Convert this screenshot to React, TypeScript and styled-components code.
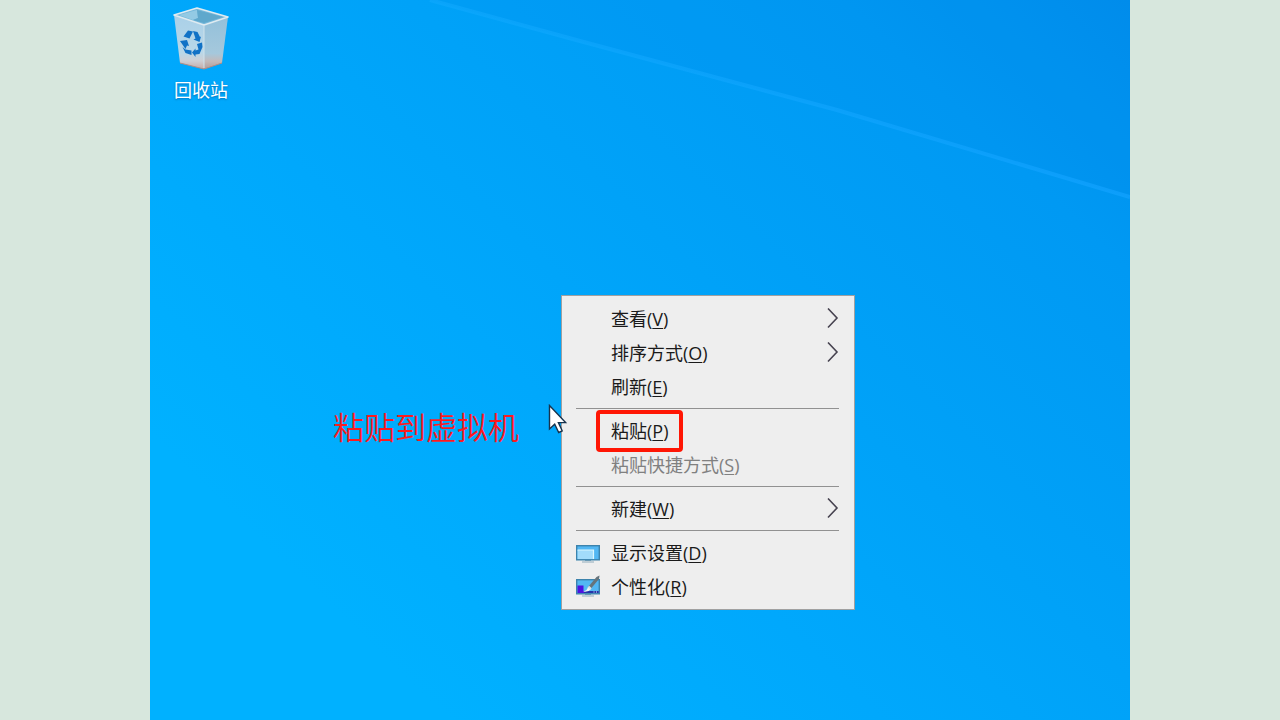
import React from "react";
import styled, { createGlobalStyle } from "styled-components";

const GlobalStyle = createGlobalStyle`
  *, *::before, *::after { box-sizing: border-box; }
  body {
    margin: 0;
    background: #d7e7dd;
    font-family: "Open Sans", "Noto Sans CJK SC", sans-serif;
  }
`;

const Page = styled.main`
  display: flex;
  min-height: 100vh;
  padding: 0 150px;
  background: #d7e7dd;
`;

const Desktop = styled.section`
  position: relative;
  flex: 1;
  min-width: 0;
  overflow: hidden;
  background: #00a8fb;
`;

const Wallpaper = styled.svg`
  position: absolute;
  inset: 0;
  width: 100%;
  height: 100%;
`;

const Shortcut = styled.button`
  position: absolute;
  top: 6px;
  left: 16px;
  display: flex;
  flex-direction: column;
  align-items: center;
  gap: 8px;
  width: 70px;
  padding: 0;
  border: 0;
  background: none;
  color: #fff;
  font: inherit;
  font-size: 18px;
  line-height: 24px;
  text-shadow: 0 1px 2px rgba(0, 40, 90, 0.4);
`;

const Note = styled.p`
  position: absolute;
  top: 404px;
  left: 183px;
  margin: 0;
  color: #fb1b1f;
  font-family: "Noto Sans CJK SC", sans-serif;
  font-size: 31px;
  font-weight: 350;
  line-height: 44px;
  white-space: nowrap;
`;

const Menu = styled.div`
  position: absolute;
  top: 295px;
  left: 411px;
  width: 294px;
  padding: 6px 0 5px;
  border: 1px solid #a0a0a0;
  background: #eee;
`;

const MenuItem = styled.button`
  position: relative;
  display: grid;
  grid-template-columns: 24px 1fr 12px;
  column-gap: 11px;
  align-items: center;
  width: 100%;
  height: 34px;
  padding: 0 15px 0 14px;
  border: 0;
  background: none;
  color: #1a1a1a;
  font: inherit;
  font-size: 18px;
  line-height: 24px;
  text-align: left;
  white-space: nowrap;

  &:disabled { color: #808080; }
`;

const IconSlot = styled.span`
  display: flex;
`;

const AccessKey = styled.span`
  text-decoration: underline;
  text-decoration-thickness: 1px;
  text-underline-offset: 2px;
`;

const Separator = styled.hr`
  height: 1px;
  margin: 4px 15px 5px 14px;
  border: 0;
  background: #919191;
`;

const Highlight = styled.span`
  position: absolute;
  top: -4px;
  left: 34px;
  width: 87px;
  height: 42px;
  border: 4px solid #ff1604;
  border-radius: 4px;
`;

const Pointer = styled.svg`
  position: absolute;
  top: 404px;
  left: 398px;
`;

function RecycleBin() {
  return (
    <svg width="56" height="64" viewBox="0 0 56 64" aria-hidden="true">
      <defs>
        <linearGradient id="binLeft" x1="0" y1="0" x2="0" y2="1">
          <stop offset="0" stopColor="#a9d0e8" />
          <stop offset="0.7" stopColor="#b9d7e8" />
          <stop offset="0.85" stopColor="#cfcfd4" />
          <stop offset="1" stopColor="#c5aaa7" />
        </linearGradient>
        <linearGradient id="binRight" x1="0" y1="0" x2="0" y2="1">
          <stop offset="0" stopColor="#93c0da" />
          <stop offset="0.7" stopColor="#a5c8dc" />
          <stop offset="0.85" stopColor="#c3b9ba" />
          <stop offset="1" stopColor="#b39c99" />
        </linearGradient>
      </defs>
      <path d="M1 9 31 19 31 63 7 57Z" fill="url(#binLeft)" />
      <path d="M31 19 55 11 49 57 31 63Z" fill="url(#binRight)" />
      <path d="M1 9 24 2 55 11 31 19Z" fill="#76b8da" />
      <path d="M6 9 24 4 25 12 20 14Z" fill="#93cae4" />
      <path d="M24 4 50 11 31 17 20 14 25 12Z" fill="#5fa8cc" />
      <path d="M1 9 24 2 55 11 31 19Z" fill="none" stroke="#dfebf1" strokeWidth="1.6" strokeLinejoin="round" />
      <path d="M31 19 31 62" stroke="#cfe2ec" />
      <path d="M7 57 31 63 49 57" fill="none" stroke="#b58c84" />
      <g fill="#1172c6">
        <path d="M10.500 30.500 15 24.500 20 25.500 16.500 32.500Z" />
        <path d="M20 25 24.500 26 27 31 28 30.500 26.500 36 20.500 33.500 22.500 32.500Z" />
        <path d="M7 35 14 34 16 40 14 39.500 12.500 43Z" />
        <path d="M9.500 41 12.500 43.500 18.500 44.500 18.500 49 12.500 47Z" />
        <path d="M24 38 29 36.500 29.500 41 26.500 48 22.500 48.500 22.500 51 19 46.500 22.500 42.500 22.500 44.500 25.500 43.500Z" />
      </g>
    </svg>
  );
}

function DisplayIcon({ brush = false }: { brush?: boolean }) {
  return (
    <svg width="24" height="24" viewBox="0 0 24 24" aria-hidden="true">
      <path d="M9 19.500h6M6 21h12" stroke="#8fabbb" strokeWidth="1.200" />
      <rect x="0.700" y="4.700" width="22.600" height="14.100" fill="#52b7f3" stroke="#3c83ac" strokeWidth="1.400" />
      {brush ? (
        <>
          <path d="M1.500 18V10.500H7.500V16H22.500V18Z" fill="#4d12e0" />
          <path d="M8 17h14.500" stroke="#1b3d9c" strokeWidth="1.600" />
          <path d="M17.500 17h1M20 17h1" stroke="#e5f0ff" strokeWidth="1" />
          <path d="M7 16.500q4-0.500 5-4.500l3 2q-2.500 3.500-8 2.500Z" fill="#eef3f6" />
          <path d="M12.500 11.500 20.500 2 23.500 0.500 23 4 15 13.500Z" fill="#66747b" />
          <path d="m12.500 11.500 2.500 2.500" stroke="#d7e0e3" strokeWidth="2" />
        </>
      ) : (
        <>
          <path d="M1.500 9H17.500v9h-16Z" fill="#a2dcfb" />
          <path d="M1.500 9H17.500v9" fill="none" stroke="#dbf7ff" strokeWidth="1.200" />
        </>
      )}
    </svg>
  );
}

function Chevron() {
  return (
    <svg width="12" height="22" viewBox="0 0 12 22" aria-hidden="true">
      <path d="m1 0.500 9 9.500-9 9.500" fill="none" stroke="#474350" strokeWidth="1.600" />
    </svg>
  );
}

type EntryProps = {
  label: string;
  accessKey: string;
  icon?: React.ReactNode;
  submenu?: boolean;
  disabled?: boolean;
  highlighted?: boolean;
};

function Entry({ label, accessKey, icon, submenu, disabled, highlighted }: EntryProps) {
  return (
    <MenuItem type="button" role="menuitem" disabled={disabled} aria-haspopup={submenu ? "menu" : undefined}>
      <IconSlot>{icon}</IconSlot>
      <span>
        {label}(<AccessKey>{accessKey}</AccessKey>)
      </span>
      {submenu && <Chevron />}
      {highlighted && <Highlight />}
    </MenuItem>
  );
}

export default function App() {
  return (
    <>
      <GlobalStyle />
      <Page>
        <Desktop>
          <Wallpaper viewBox="0 0 980 720" preserveAspectRatio="none" aria-hidden="true">
            <defs>
              <linearGradient id="sky" gradientUnits="userSpaceOnUse" x1="980" y1="0" x2="300" y2="720">
                <stop offset="0" stopColor="#008eec" />
                <stop offset="0.2" stopColor="#0099f3" />
                <stop offset="0.5" stopColor="#00a2f8" />
                <stop offset="0.7" stopColor="#00a8fc" />
                <stop offset="1" stopColor="#00b1ff" />
              </linearGradient>
              <linearGradient id="beam" x1="0" x2="1">
                <stop offset="0" stopColor="#12aaff" stopOpacity="0.5" />
                <stop offset="1" stopColor="#12a2ff" stopOpacity="0.7" />
              </linearGradient>
            </defs>
            <rect width="980" height="720" fill="url(#sky)" />
            <path d="M280 0 430 41 687 110 980 197V0Z" fill="#0084e5" opacity="0.12" />
            <path d="M280 0 430 41 687 110 980 197" fill="none" stroke="url(#beam)" strokeWidth="4" />
          </Wallpaper>
          <Shortcut type="button">
            <RecycleBin />
            回收站
          </Shortcut>
          <Note>粘贴到虚拟机</Note>
          <Menu role="menu" aria-label="桌面">
            <Entry label="查看" accessKey="V" submenu />
            <Entry label="排序方式" accessKey="O" submenu />
            <Entry label="刷新" accessKey="E" />
            <Separator />
            <Entry label="粘贴" accessKey="P" highlighted />
            <Entry label="粘贴快捷方式" accessKey="S" disabled />
            <Separator />
            <Entry label="新建" accessKey="W" submenu />
            <Separator />
            <Entry label="显示设置" accessKey="D" icon={<DisplayIcon />} />
            <Entry label="个性化" accessKey="R" icon={<DisplayIcon brush />} />
          </Menu>
          <Pointer width="20" height="32" viewBox="0 0 20 32" aria-hidden="true">
            <path d="M1.500 1.500V25l5.200-4.800 4 8.300 3.500-1.700-3.800-8.200h7.200Z" fill="#fff" stroke="#18334d" strokeWidth="1.400" />
          </Pointer>
        </Desktop>
      </Page>
    </>
  );
}
